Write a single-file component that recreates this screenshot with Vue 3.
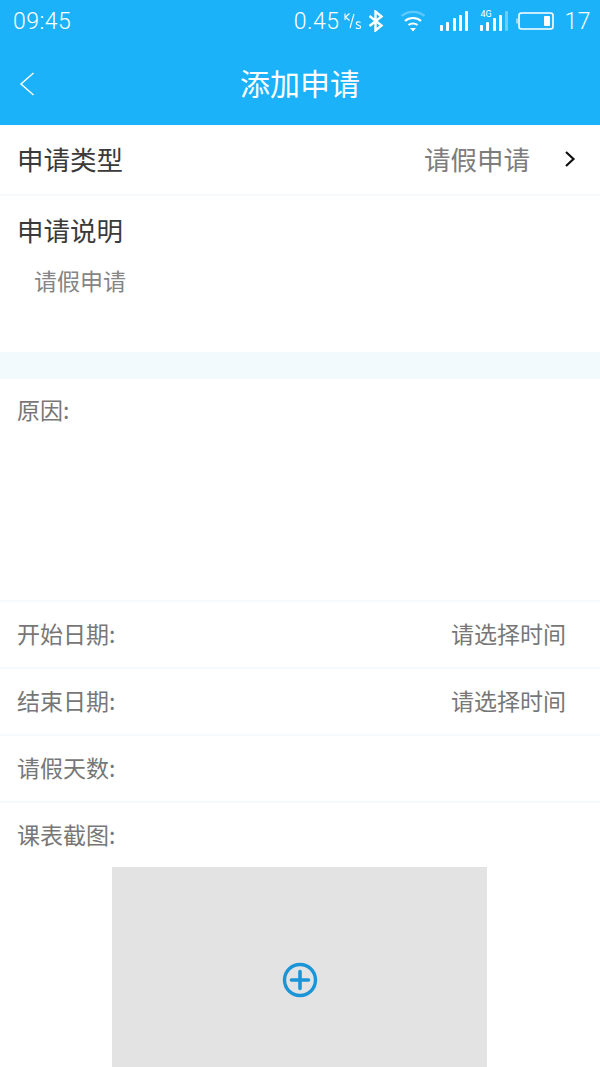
<script setup>
const fields = [
  { label: '开始日期:', value: '请选择时间' },
  { label: '结束日期:', value: '请选择时间' },
  { label: '请假天数:', value: '' },
]
</script>

<template>
  <div class="page">
    <header class="head">
      <div class="status">
        <span class="time">09:45</span>
        <div class="sys">
          <span class="speed">0.45</span>
          <svg class="unit" width="18" height="18" viewBox="0 0 18 18" fill="none" stroke="#fff" stroke-width="1.100">
            <path d="M1 1.500V8M5.500 1.500 1.500 5 5.500 8.500M10 2 6 16" />
            <path d="M16.500 10.500C15 9.300 12 9.700 12.300 11.600 12.600 13.400 16.800 13 16.700 15 16.600 16.800 13.500 17 11.800 15.700" />
          </svg>
          <svg class="bt" width="16" height="22" viewBox="0 0 16 22" fill="none" stroke="#fff" stroke-width="2.400">
            <path d="M1.500 6 13.500 15.500 7.500 20.500V1.500L13.500 6.500 1.500 16" />
          </svg>
          <svg class="wifi" width="26" height="22" viewBox="0 0 26 22" fill="none" stroke="#fff" stroke-width="2.200">
            <path d="M1.500 6C8 .5 18 .5 24.500 6" opacity=".3" />
            <path d="M5 11C9.500 7 16.500 7 21 11" />
            <path d="M8.500 15C11 13 15 13 17.500 15" />
            <path d="M10 18H16L13 21.500Z" fill="#fff" stroke="none" />
          </svg>
          <svg class="sig" width="28" height="22" viewBox="0 0 28 22" fill="#fff">
            <rect x="0" y="15" width="3" height="6" rx="1" />
            <rect x="6" y="12" width="3" height="9" rx="1" />
            <rect x="13" y="8" width="3" height="13" rx="1" />
            <rect x="19" y="5" width="3" height="16" rx="1" />
            <rect x="25" y="1" width="3" height="20" rx="1" />
          </svg>
          <div class="sig2">
            <span class="tag">4G</span>
            <svg width="28" height="22" viewBox="0 0 28 22" fill="#fff">
              <rect x="0" y="15" width="3" height="6" rx="1" />
              <rect x="6" y="12" width="3" height="9" rx="1" />
              <rect x="13" y="8" width="3" height="13" rx="1" />
              <rect x="19" y="5" width="3" height="16" rx="1" />
              <rect x="25" y="1" width="3" height="20" rx="1" opacity=".35" />
            </svg>
          </div>
          <svg class="bat" width="38" height="18" viewBox="0 0 38 18" fill="none">
            <path d="M1 6.500V11.500" stroke="#fff" stroke-width="1.400" opacity=".7" />
            <rect x="3" y="1" width="34" height="16" rx="2.500" stroke="#fff" stroke-width="1.600" />
            <rect x="28" y="4" width="6" height="10" rx="1" fill="#fff" />
          </svg>
          <span class="pct">17</span>
        </div>
      </div>
      <div class="nav">
        <svg class="back" width="16" height="26" viewBox="0 0 16 26" fill="none" stroke="#fff" stroke-width="1.500">
          <path d="M14.500 2 2 13 14.500 24" />
        </svg>
        <h1 class="title">添加申请</h1>
      </div>
    </header>

    <div class="row type">
      <span class="strong">申请类型</span>
      <div class="pick">
        <span class="pick-v">请假申请</span>
        <svg width="12" height="18" viewBox="0 0 12 18" fill="none" stroke="#111" stroke-width="2.200">
          <path d="M2 2 9.500 9 2 16" />
        </svg>
      </div>
    </div>

    <section class="desc">
      <div class="strong">申请说明</div>
      <div class="desc-v">请假申请</div>
    </section>

    <div class="band"></div>

    <section class="reason">原因:</section>

    <div v-for="f in fields" :key="f.label" class="row field">
      <span>{{ f.label }}</span>
      <span class="fv">{{ f.value }}</span>
    </div>

    <section class="shot">
      <div class="shot-l">课表截图:</div>
      <div class="box">
        <svg width="36" height="36" viewBox="0 0 36 36" fill="none" stroke="#1b95d8">
          <circle cx="18" cy="18" r="15.500" stroke-width="3.400" />
          <path d="M18 9.500V26.500M9.500 18H26.500" stroke-width="3.600" stroke-linecap="round" />
        </svg>
      </div>
    </section>
  </div>
</template>

<style scoped>
.page {
  width: 600px;
  height: 1067px;
  overflow: hidden;
  background: #fff;
  font-family: "Noto Sans CJK SC", "Noto Sans", sans-serif;
  color: #777;
}
.head {
  height: 125px;
  background: #1bb2f9;
  color: #fff;
}
.status {
  height: 42px;
  display: flex;
  align-items: center;
  justify-content: space-between;
  padding: 0 9px 0 13px;
}
.time,
.speed,
.pct {
  font-family: Roboto, sans-serif;
  font-size: 23px;
  font-weight: 300;
  letter-spacing: 0.5px;
}
.sys {
  display: flex;
  align-items: center;
}
.unit {
  margin: 0 6px 0 5px;
}
.wifi {
  margin-left: 16px;
}
.sig {
  margin-left: 14px;
}
.sig2 {
  position: relative;
  margin-left: 12px;
  height: 22px;
}
.tag {
  position: absolute;
  left: 0;
  top: -1px;
  font-family: Roboto, sans-serif;
  font-size: 9px;
  line-height: 10px;
}
.bat {
  margin-left: 8px;
}
.pct {
  margin-left: 10px;
}
.nav {
  position: relative;
  height: 83px;
  display: flex;
  align-items: center;
  justify-content: center;
}
.back {
  position: absolute;
  left: 19px;
  top: 29px;
}
.title {
  margin: 0 0 3px;
  font-size: 30px;
  line-height: 40px;
  font-weight: 400;
}
.row {
  display: flex;
  align-items: center;
  justify-content: space-between;
  border-bottom: 2px solid #f6fafc;
  box-sizing: border-box;
}
.type {
  height: 71px;
  padding: 0 24px 2px 17px;
}
.strong {
  font-size: 26.500px;
  line-height: 36px;
  color: #3a3a3a;
}
.pick {
  display: flex;
  align-items: center;
  gap: 34px;
}
.pick-v {
  font-size: 26.500px;
  color: #7d7d7d;
}
.desc {
  height: 156px;
  box-sizing: border-box;
  padding: 16px 17px 0;
}
.desc-v {
  margin: 16px 0 0 17px;
  font-size: 23px;
  line-height: 32px;
  color: #858585;
}
.band {
  height: 27px;
  background: #f3fafd;
}
.reason {
  height: 223px;
  box-sizing: border-box;
  padding: 14px 17px 0;
  font-size: 23px;
  line-height: 32px;
  border-bottom: 2px solid #f6fafc;
}
.field {
  height: 67px;
  padding: 0 34px 4px 17px;
  font-size: 23px;
}
.fv {
  color: #777;
}
.shot-l {
  height: 64px;
  display: flex;
  align-items: center;
  padding: 0 0 2px 17px;
  box-sizing: border-box;
  font-size: 23px;
}
.box {
  width: 375px;
  height: 226px;
  margin-left: 112px;
  background: #e3e3e3;
  display: flex;
  align-items: center;
  justify-content: center;
}
</style>
